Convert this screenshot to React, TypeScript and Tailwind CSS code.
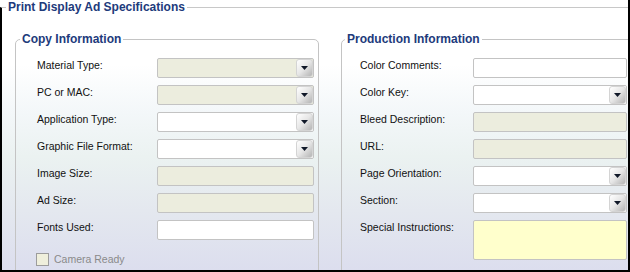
import React from 'react';

type Field = {
  label: string;
  kind: 'text' | 'select' | 'note';
  readOnly?: boolean;
};

const copyFields: Field[] = [
  { label: 'Material Type:', kind: 'select', readOnly: true },
  { label: 'PC or MAC:', kind: 'select', readOnly: true },
  { label: 'Application Type:', kind: 'select' },
  { label: 'Graphic File Format:', kind: 'select' },
  { label: 'Image Size:', kind: 'text', readOnly: true },
  { label: 'Ad Size:', kind: 'text', readOnly: true },
  { label: 'Fonts Used:', kind: 'text' },
];

const productionFields: Field[] = [
  { label: 'Color Comments:', kind: 'text' },
  { label: 'Color Key:', kind: 'select' },
  { label: 'Bleed Description:', kind: 'text', readOnly: true },
  { label: 'URL:', kind: 'text', readOnly: true },
  { label: 'Page Orientation:', kind: 'select' },
  { label: 'Section:', kind: 'select' },
  { label: 'Special Instructions:', kind: 'note' },
];

const DropButton = () => (
  <div className="flex w-[17px] items-center justify-center rounded-[3px] border border-[#d4d4d4] bg-gradient-to-br from-white via-[#e6e6e6] to-[#b4b4b4]">
    <svg width="7" height="4" viewBox="0 0 7 4">
      <polygon points="0,0 7,0 3.5,4" fill="#101828" />
    </svg>
  </div>
);

const FieldRow: React.FC<{ field: Field; labelWidth: string; inputWidth: string }> = ({
  field,
  labelWidth,
  inputWidth,
}) => {
  const bg = field.kind === 'note' ? 'bg-[#ffffcc]' : field.readOnly ? 'bg-[#ecedde]' : 'bg-white';
  const height = field.kind === 'note' ? 'h-[40px]' : 'h-[20px]';
  return (
    <div className="flex items-start">
      <div className={`${labelWidth} text-[10.5px] leading-[14px] text-[#111]`}>{field.label}</div>
      <div className={`${inputWidth} ${height} ${bg} flex justify-end rounded-[2px] border border-[#c3c3c3]`}>
        {field.kind === 'select' && <DropButton />}
      </div>
    </div>
  );
};

export default function App() {
  return (
    <div className="h-[272px] w-[630px] overflow-hidden border-r-2 border-b-2 border-black bg-[linear-gradient(to_bottom,#ffffff_0%,#ffffff_24%,#f3f7f9_42%,#ebf2f1_58%,#e4e8ef_78%,#dcdeee_100%)] font-['Liberation_Sans',Arial,sans-serif]">
      <fieldset className="h-full border-0 border-t border-l-2 border-t-[#c8c8c8] border-l-black">
        <legend className="ml-[4px] px-[2px] text-[12px] font-bold leading-[14px] text-[#213a7b]">
          Print Display Ad Specifications
        </legend>

        <div className="mt-[18px] ml-[13px] flex gap-[22px]">
          {/* Copy Information */}
          <fieldset className="w-[304px] shrink-0 rounded-t-[5px] border border-[#c4c4c4] pb-[12px]">
            <legend className="ml-[4px] px-[2px] text-[12px] font-bold leading-[14px] text-[#213a7b]">
              Copy Information
            </legend>
            <div className="flex flex-col gap-[7px] pt-[12px] pl-[21px]">
              {copyFields.map((f) => (
                <FieldRow key={f.label} field={f} labelWidth="w-[120px]" inputWidth="w-[157px]" />
              ))}
              <div className="mt-[5px] -ml-px flex items-center gap-[5px]">
                <div className="h-[13px] w-[13px] border border-[#9c9c9c] bg-[#efefdc]" />
                <span className="text-[10.5px] leading-[14px] text-[#8a8a8a]">Camera Ready</span>
              </div>
            </div>
          </fieldset>

          {/* Production Information */}
          <fieldset className="w-[310px] shrink-0 rounded-t-[5px] border border-[#c4c4c4] pb-[12px]">
            <legend className="ml-[3px] px-[2px] text-[12px] font-bold leading-[14px] text-[#213a7b]">
              Production Information
            </legend>
            <div className="flex flex-col gap-[7px] pt-[12px] pl-[18px]">
              {productionFields.map((f) => (
                <FieldRow key={f.label} field={f} labelWidth="w-[113px]" inputWidth="w-[154px]" />
              ))}
            </div>
          </fieldset>
        </div>
      </fieldset>
    </div>
  );
}
